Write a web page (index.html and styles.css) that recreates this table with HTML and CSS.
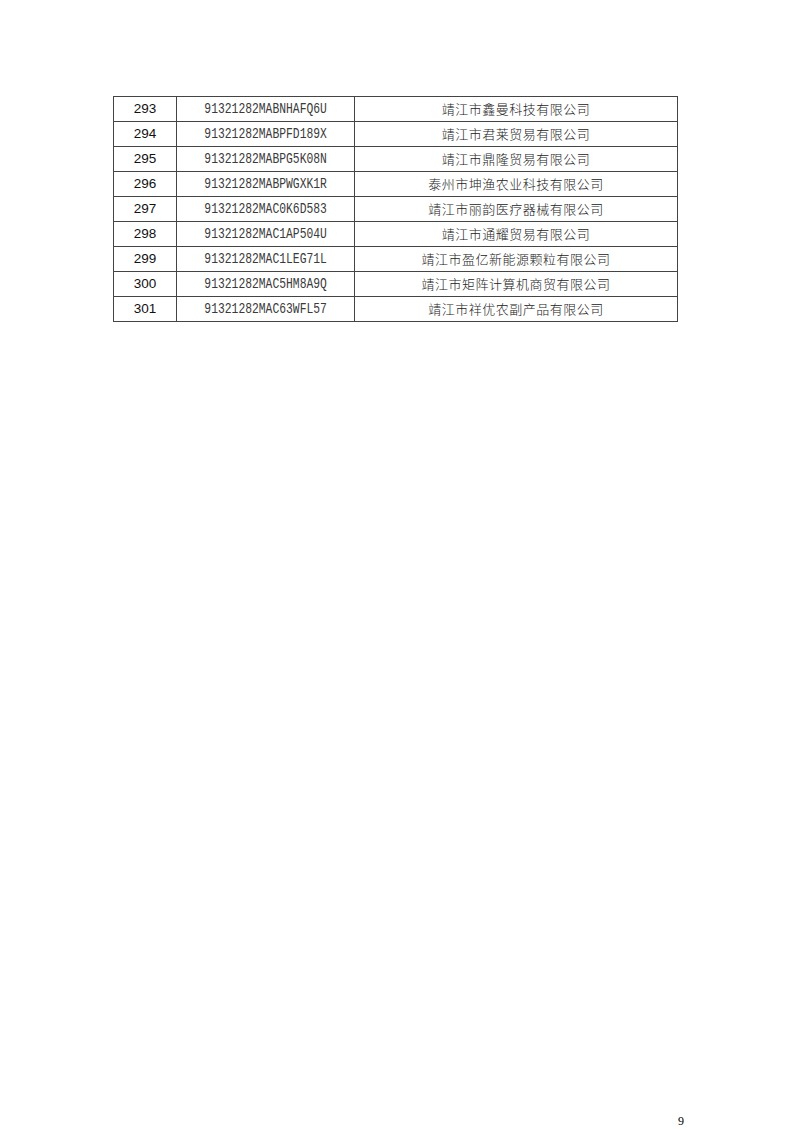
FILE: index.html
```html
<!DOCTYPE html>
<html lang="zh">
<head>
<meta charset="utf-8">
<link rel="stylesheet" href="styles.css">
</head>
<body>
<div class="page">
  <table class="list">
    <colgroup><col class="c-no"><col class="c-code"><col class="c-name"></colgroup>
    <tbody>
      <tr><td class="no">293</td><td class="code"><span>91321282MABNHAFQ6U</span></td><td class="name">靖江市鑫曼科技有限公司</td></tr>
      <tr><td class="no">294</td><td class="code"><span>91321282MABPFD189X</span></td><td class="name">靖江市君莱贸易有限公司</td></tr>
      <tr><td class="no">295</td><td class="code"><span>91321282MABPG5K08N</span></td><td class="name">靖江市鼎隆贸易有限公司</td></tr>
      <tr><td class="no">296</td><td class="code"><span>91321282MABPWGXK1R</span></td><td class="name">泰州市坤渔农业科技有限公司</td></tr>
      <tr><td class="no">297</td><td class="code"><span>91321282MAC0K6D583</span></td><td class="name">靖江市丽韵医疗器械有限公司</td></tr>
      <tr><td class="no">298</td><td class="code"><span>91321282MAC1AP504U</span></td><td class="name">靖江市通耀贸易有限公司</td></tr>
      <tr><td class="no">299</td><td class="code"><span>91321282MAC1LEG71L</span></td><td class="name">靖江市盈亿新能源颗粒有限公司</td></tr>
      <tr><td class="no">300</td><td class="code"><span>91321282MAC5HM8A9Q</span></td><td class="name">靖江市矩阵计算机商贸有限公司</td></tr>
      <tr><td class="no">301</td><td class="code"><span>91321282MAC63WFL57</span></td><td class="name">靖江市祥优农副产品有限公司</td></tr>
    </tbody>
  </table>
  <div class="footer">9</div>
</div>
</body>
</html>
```
FILE: styles.css
```css
html, body {
  margin: 0;
  padding: 0;
  background: #ffffff;
}
.page {
  box-sizing: border-box;
  width: 800px;
  height: 1131px;
  padding: 96px 0 0 113px;
  display: flex;
  flex-direction: column;
}
.list {
  border-collapse: collapse;
  table-layout: fixed;
  width: 565px;
  color: #111;
}
.c-no { width: 63px; }
.c-code { width: 178px; }
.list td {
  border: 1px solid #444;
  height: 24px;
  padding: 0;
  text-align: center;
  vertical-align: middle;
  line-height: 24px;
  white-space: nowrap;
}
.no {
  font-family: "Liberation Sans", Arial, sans-serif;
  font-size: 13.5px;
}
.code {
  font-family: "Liberation Mono", monospace;
  font-size: 14px;
  color: #3a3a3a;
}
.code span {
  display: inline-block;
  transform: scaleX(0.81);
}
.name {
  font-family: "Noto Sans CJK SC", sans-serif;
  font-size: 13px;
  letter-spacing: 0.5px;
  font-weight: 300;
  color: #222;
}
.footer {
  margin-top: auto;
  align-self: flex-end;
  margin-right: 116px;
  margin-bottom: 2px;
  font-family: "Liberation Serif", serif;
  font-size: 12px;
  color: #000;
}
```
